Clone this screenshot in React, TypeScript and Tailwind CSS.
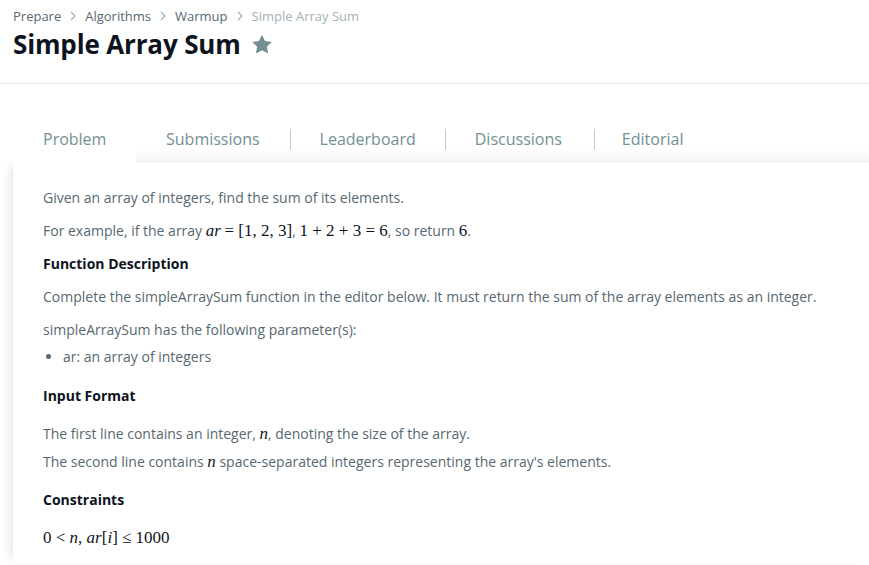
import React from 'react';

const sans = "font-['Open_Sans',sans-serif]";

function M({ children, i }: { children: React.ReactNode; i?: boolean }) {
  return (
    <span className={`font-['Liberation_Serif',serif] text-[17px] text-[#0e141e] ${i ? 'italic' : ''}`}>
      {children}
    </span>
  );
}

function Chevron() {
  return (
    <svg width="12" height="12" viewBox="0 0 12 12" className="mx-[6px]">
      <path d="M4 2l4 4-4 4" fill="none" stroke="#a4b1b5" strokeWidth="1.2" />
    </svg>
  );
}

const tabPad = ['pl-[30px] pr-[30px]', 'px-[29px]', 'pl-[29px] pr-[32px]', 'px-[27px]'];

export default function App() {
  const tabs = ['Submissions', 'Leaderboard', 'Discussions', 'Editorial'];
  return (
    <div className={`${sans} w-[869px] h-[565px] overflow-hidden bg-white`}>
      {/* header */}
      <div className="border-b border-[#e7eaec] px-[13px] pt-[7px] h-[84px]">
        <div className="flex items-center text-[13px] leading-[18px] text-[#576871]">
          <span>Prepare</span>
          <Chevron />
          <span>Algorithms</span>
          <Chevron />
          <span>Warmup</span>
          <Chevron />
          <span className="text-[#a4b1b5]">Simple Array Sum</span>
        </div>
        <div className="flex items-center">
          <h1 className="text-[26px] leading-[38px] font-bold text-[#0e141e] tracking-[-0.15px]">Simple Array Sum</h1>
          <svg width="22" height="21" viewBox="0 0 24 23" className="ml-[10px] mt-[1px]">
            <path d="M12 0.8l3.3 6.9 7.5 1-5.5 5.2 1.4 7.5L12 17.8l-6.7 3.6 1.4-7.5L1.2 8.7l7.5-1z" fill="#738f93" />
          </svg>
        </div>
      </div>

      {/* tabs */}
      <div className="mt-[31px] pl-[13px]">
        <div className="flex h-[48px]">
          <div className="w-[123px] bg-white pl-[30px] pt-[12px] text-[16px] text-[#738f93]">
            Problem
          </div>
          <div className="flex-1 flex items-start pt-[12px] bg-gradient-to-b from-white from-70% to-[#f3f3f3] text-[16px] text-[#738f93]">
            {tabs.map((t, idx) => (
              <div key={t} className="flex items-center">
                {idx > 0 && <div className="w-px h-[21px] bg-[#c2ccd0]" />}
                <div className={tabPad[idx]}>{t}</div>
              </div>
            ))}
          </div>
        </div>

        {/* card */}
        <div className="bg-white shadow-[-6px_0_10px_-4px_rgba(0,0,0,0.12)] pl-[30px] pt-[25px] text-[14px] leading-[20px] text-[#576871] h-[400px]">
          <p>Given an array of integers, find the sum of its elements.</p>
          <p className="mt-[13px]">
            For example, if the array <M i>ar</M> <M>= [1, 2, 3]</M>, <M>1 + 2 + 3 = 6</M>, so return <M>6</M>.
          </p>
          <p className="mt-[13px] font-bold text-[#0e141e]">Function Description</p>
          <p className="mt-[13px]">
            Complete the simpleArraySum function in the editor below. It must return the sum of the array elements as an integer.
          </p>
          <p className="mt-[13px]">simpleArraySum has the following parameter(s):</p>
          <ul className="mt-[7px] list-disc pl-[20px]">
            <li>ar: an array of integers</li>
          </ul>
          <p className="mt-[19px] font-bold text-[#0e141e]">Input Format</p>
          <p className="mt-[18px]">
            The first line contains an integer, <M i>n</M>, denoting the size of the array.
          </p>
          <p className="mt-[8px]">
            The second line contains <M i>n</M> space-separated integers representing the array's elements.
          </p>
          <p className="mt-[18px] font-bold text-[#0e141e]">Constraints</p>
          <p className="mt-[18px]">
            <M>0 &lt; </M>
            <M i>n</M>
            <M>, </M>
            <M i>ar</M>
            <M>[</M>
            <M i>i</M>
            <M>] ≤ 1000</M>
          </p>
        </div>
      </div>
    </div>
  );
}
